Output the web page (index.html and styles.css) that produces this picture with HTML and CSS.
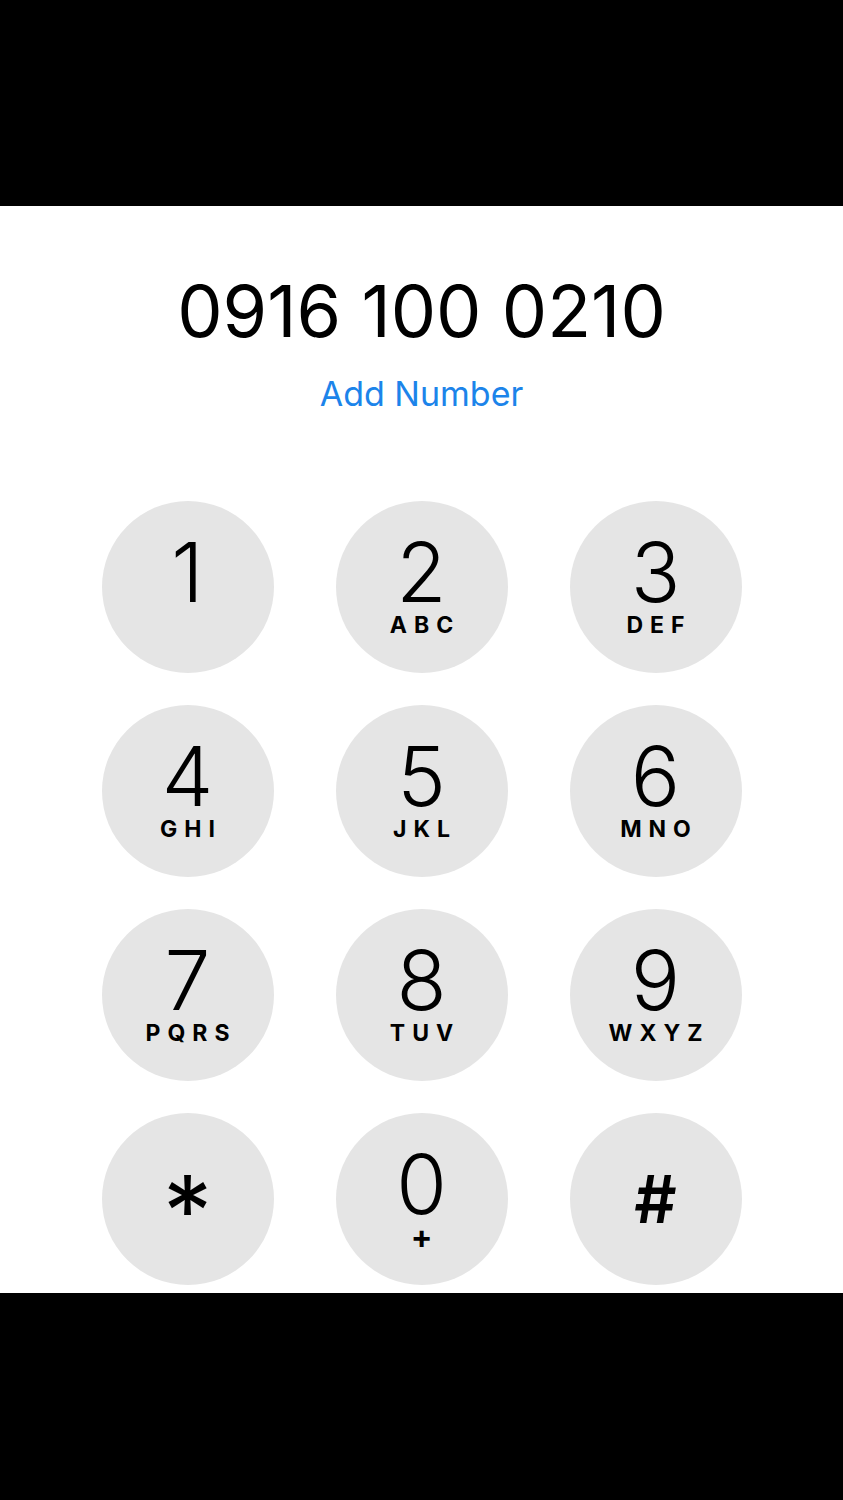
FILE: index.html
```html
<!DOCTYPE html>
<html lang="en">
<head>
  <meta charset="UTF-8">
  <title>Keypad</title>
  <link rel="stylesheet" href="styles.css">
</head>
<body>

<div class="screen">
  <div class="number">0916 100 0210</div>
  <div class="add">Add Number</div>

  <div class="keypad">
    <div class="key"><span class="digit">1</span></div>
    <div class="key"><span class="digit">2</span><span class="letters">ABC</span></div>
    <div class="key"><span class="digit">3</span><span class="letters">DEF</span></div>
    <div class="key"><span class="digit">4</span><span class="letters">GHI</span></div>
    <div class="key"><span class="digit">5</span><span class="letters">JKL</span></div>
    <div class="key"><span class="digit">6</span><span class="letters">MNO</span></div>
    <div class="key"><span class="digit">7</span><span class="letters">PQRS</span></div>
    <div class="key"><span class="digit">8</span><span class="letters">TUV</span></div>
    <div class="key"><span class="digit">9</span><span class="letters">WXYZ</span></div>
    <div class="key symbol"><span class="star">*</span></div>
    <div class="key"><span class="digit">0</span><span class="plus">+</span></div>
    <div class="key symbol"><span class="hash">#</span></div>
  </div>
</div>

</body>
</html>
```

FILE: styles.css
```css
body {
  margin: 0;
  background: #000;
  font-family: Inter, "Liberation Sans", sans-serif;
  color: #000;
}
.screen {
  margin-top: 206px;
  height: 1087px;
  background: #fff;
  overflow: hidden;
}
.number {
  font-size: 72px;
  line-height: 90px;
  text-align: center;
  padding-top: 60px;
}
.add {
  font-size: 34px;
  line-height: 40px;
  color: #1c84ea;
  text-align: center;
  margin-top: 18px;
}
.keypad {
  display: grid;
  grid-template-columns: repeat(3, 172px);
  column-gap: 62px;
  row-gap: 32px;
  justify-content: center;
  margin-top: 87px;
}
.key {
  width: 172px;
  height: 172px;
  border-radius: 50%;
  background: #e5e5e5;
  display: flex;
  flex-direction: column;
  align-items: center;
  box-sizing: border-box;
  padding-top: 41px;
}
.digit {
  font-size: 82px;
  font-weight: 300;
  line-height: 62px;
}
.letters {
  font-size: 23px;
  font-weight: 700;
  line-height: 18px;
  letter-spacing: 7px;
  padding-left: 7px;
  margin-top: 12px;
}
.plus {
  font-size: 32px;
  font-weight: 700;
  line-height: 18px;
  margin-top: 12px;
}
.symbol {
  padding-top: 0;
}
.star {
  font-size: 98px;
  font-weight: 400;
  line-height: 98px;
  margin-top: 49px;
}
.hash {
  font-size: 66px;
  font-weight: 600;
  line-height: 66px;
  margin-top: 53px;
}
```
